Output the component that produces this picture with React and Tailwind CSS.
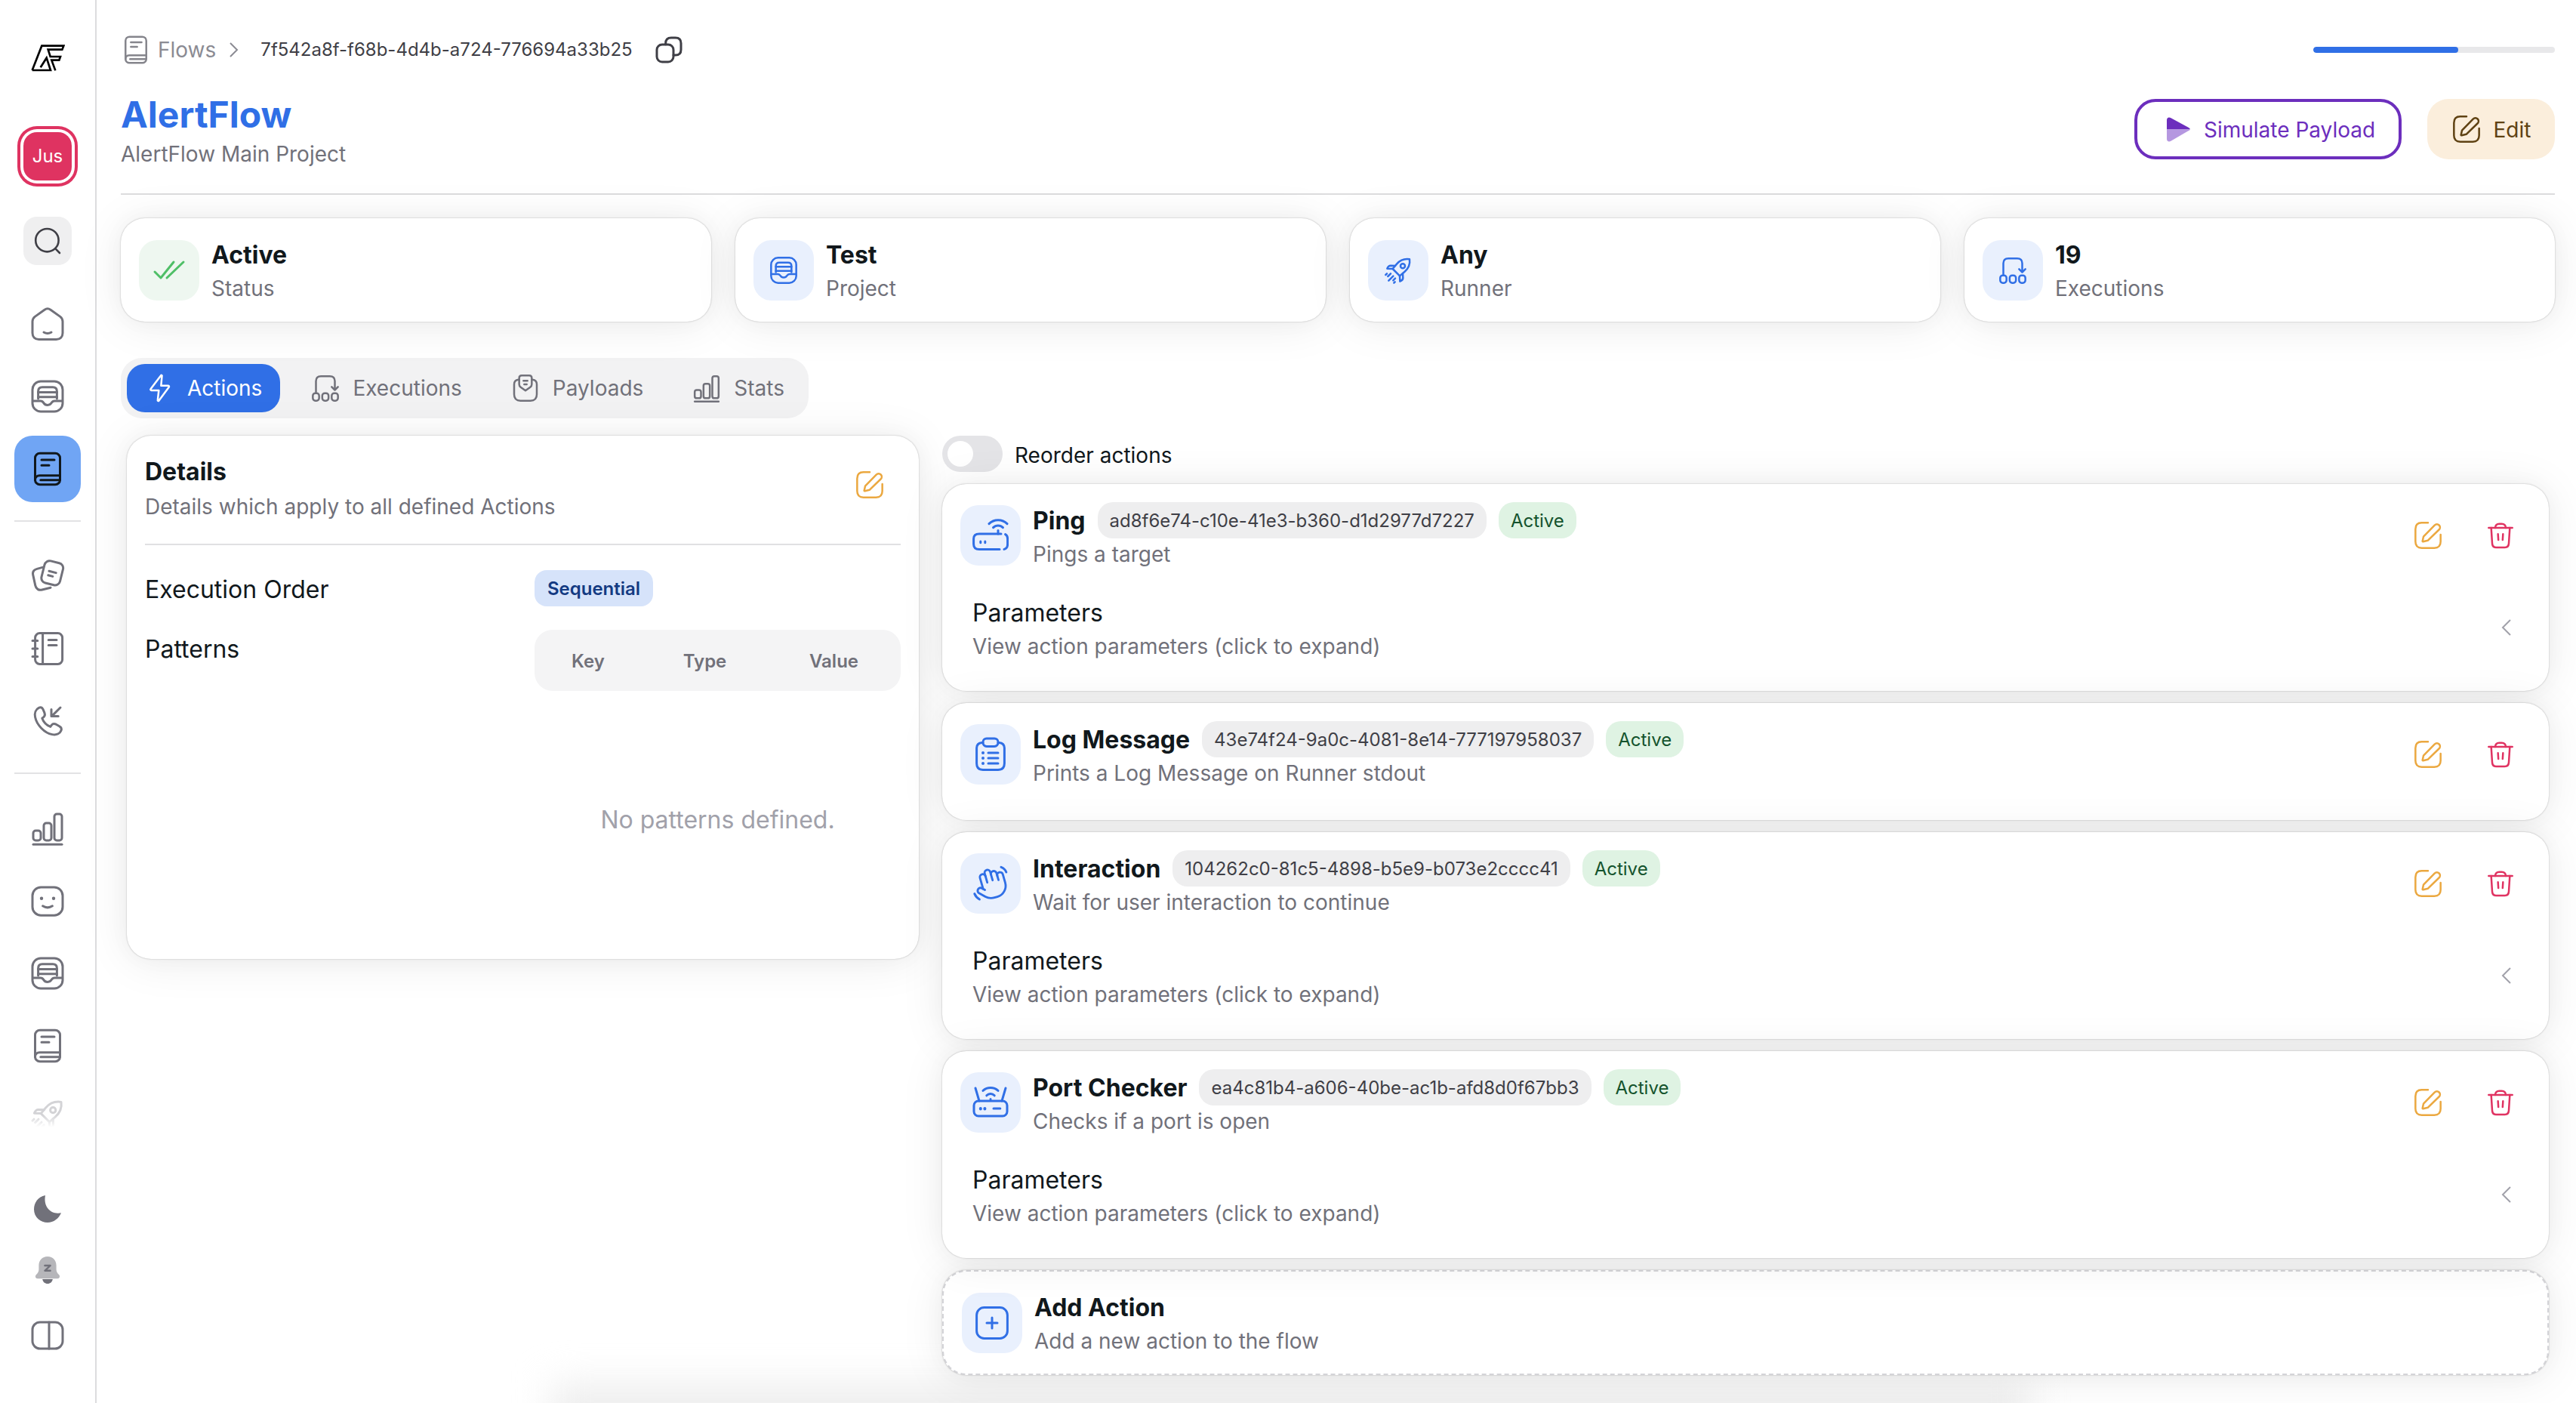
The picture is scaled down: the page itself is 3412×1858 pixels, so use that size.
import React from "react";

const Ic = ({ size = 48, className = "", children, sw = 1.5 }) => (
  <svg width={size} height={size} viewBox="0 0 24 24" fill="none" stroke="currentColor" strokeWidth={sw} strokeLinecap="round" strokeLinejoin="round" className={"shrink-0 " + className}>
    {children}
  </svg>
);

const Home = (p) => (
  <Ic {...p}>
    <path d="M10 2.6 3.6 7.2C2.6 8 2 9 2 10.4V18c0 2.6 1.6 4.2 4.2 4.2h11.6c2.6 0 4.2-1.6 4.2-4.2v-7.6c0-1.4-.6-2.4-1.6-3.2L14 2.6c-1.2-.9-2.8-.9-4 0Z" />
    <path d="M9.500 17.500c1.600 1 3.400 1 5 0" />
  </Ic>
);
const Inbox = (p) => (
  <Ic {...p}>
    <rect x="2" y="2" width="20" height="20" rx="5.500" />
    <path d="M5.800 13.500V8.600c0-1.700 1-2.700 2.700-2.700h7c1.700 0 2.700 1 2.700 2.700v4.900" />
    <path d="M5.800 9.200h12.400M5.800 12.400h12.400" />
    <path d="M2.400 15h5c1 0 1.500.5 2 1.300.6 1 1.300 1.400 2.600 1.400s2-.4 2.600-1.400c.5-.8 1-1.300 2-1.300h5" />
  </Ic>
);
const Book = (p) => (
  <Ic {...p}>
    <rect x="3.750" y="1.600" width="16.500" height="20.800" rx="3.200" />
    <path d="M3.750 19.400c0-1.900 1.200-3 3-3h13.500" />
    <path d="M7.400 19.400h12.800" />
    <path d="M8 6h8.500M8 9.600h5" />
  </Ic>
);
const Notes = (p) => (
  <Ic {...p}>
    <rect x="8.800" y="2.400" width="12.600" height="15" rx="3.400" transform="rotate(14 15 10)" />
    <path d="M8.600 6.200 5 7.200c-2.100.6-3.100 2-2.600 4.100l1.500 6.900c.5 2.300 2.300 3.400 4.500 2.800l5.600-1.400" />
    <path d="M13 8.600l4.600 1.200M12.400 11.400l3 .8" />
  </Ic>
);
const Notebook = (p) => (
  <Ic {...p}>
    <rect x="3.800" y="1.800" width="18" height="20.400" rx="3" />
    <path d="M8.800 1.800v20.400M12.600 6.200h5.400M12.600 9.800h5.400" />
    <path d="M2 6.800h3.400M2 12h3.400M2 17.200h3.400" />
  </Ic>
);
const Phone = (p) => (
  <Ic {...p}>
    <path d="M10 6.600 9 4.200C8.400 3 7.400 2.600 6.200 3.200 4.200 4.200 3.200 6.600 3.800 9.400c1 5 6 10.400 11.200 11.400 3 .6 5.200-.6 6-2.600.4-1.200 0-2.200-1.200-2.800L17.400 14c-1.200-.5-2.100-.2-2.800.7l-.7 1c-2.400-.9-4.600-3.200-5.500-5.600l1-.8c.8-.7 1-1.600.6-2.700Z" />
    <path d="M20.500 3 14.800 8.700M14.500 4.200v4.600h4.600" />
  </Ic>
);
const Bars = (p) => (
  <Ic {...p}>
    <rect x="2.500" y="13.500" width="5" height="6.500" rx="1.600" />
    <rect x="9.500" y="8.500" width="5" height="11.500" rx="1.600" />
    <rect x="16.500" y="2.500" width="5" height="17.500" rx="1.600" />
    <path d="M2.500 22.600h19" />
  </Ic>
);
const Smile = (p) => (
  <Ic {...p}>
    <rect x="2" y="3" width="20" height="18.600" rx="5.600" />
    <path d="M8 10.400h.01M16 10.400h.01" strokeWidth="2.200" />
    <path d="M8.800 15.400c2 1.300 4.400 1.300 6.400 0" />
  </Ic>
);
const Rocket = (p) => (
  <Ic {...p}>
    <path d="M21 3.200c-4-.6-7.600.8-10.200 3.800L7.600 10.800l5.600 5.600 3.800-3.200C20 10.600 21.600 7.200 21 3.200Z" />
    <circle cx="15.600" cy="8.600" r="1.800" />
    <path d="M9.600 8.400 6 8.200c-1.200 0-2.200.8-2.800 2.400l4.400.2M15.600 14.400l.2 3.600c0 1.200-.8 2.200-2.400 2.800l-.2-4.400" />
    <path d="M6 14.600 3.800 16.800M8 16.600l-3.600 3.600M9.600 18.400l-1.600 1.600M3 14.600l-1 1M9.400 21.200l-.8.8" />
  </Ic>
);
const Edit = (p) => (
  <Ic {...p}>
    <path d="M12 2H7C3.600 2 2 3.600 2 7v10c0 3.400 1.600 5 5 5h10c3.400 0 5-1.600 5-5v-5.600" />
    <path d="M7.600 16.600 8.400 13 17.200 4c1.100-1.100 2.600-1.100 3.600-.1s1 2.500-.1 3.600l-8.900 8.600-3.600.9a.5.5 0 0 1-.6-.4Z" />
  </Ic>
);
const Trash = (p) => (
  <Ic {...p}>
    <path d="M2.600 6h18.800" />
    <path d="M7.800 6c.1-2 1.400-3.200 3.200-3.200h2c1.800 0 3.100 1.200 3.200 3.200" />
    <path d="m4.600 6 .8 12.400c.1 2 1.400 3.200 3.200 3.200h6.800c1.800 0 3.100-1.200 3.200-3.200L19.400 6" />
    <path d="m10 11 .3 4.600M14 11l-.3 4.600" />
  </Ic>
);
const Flow = (p) => (
  <Ic {...p}>
    <rect x="2" y="16" width="5" height="6" rx="2" />
    <rect x="9.500" y="16" width="5" height="6" rx="2" />
    <rect x="17" y="16" width="5" height="6" rx="2" />
    <path d="M4.500 16V6.500c0-2.600 1.400-4 4-4h7c2.600 0 4 1.400 4 4V13" />
    <path d="m17 11 2.500 2.500L22 11" />
  </Ic>
);
const Payload = (p) => (
  <Ic {...p}>
    <path d="M7 5.200H6.400C4.200 5.400 3 6.800 3 9v8c0 3.200 1.800 5 5 5h8c3.200 0 5-1.800 5-5V9c0-2.200-1.200-3.600-3.400-3.800H17" />
    <path d="M7 4c0-1.200.8-2 2-2h6c1.200 0 2 .8 2 2v5c0 1-.4 1.600-1.200 2.200L12 14l-3.800-2.800C7.400 10.600 7 10 7 9V4Z" />
    <path d="M10.400 6.200h3.200M11 9h2" />
  </Ic>
);
const Zap = (p) => (
  <Ic {...p}>
    <path d="M13.500 2.400c.2-.5-.4-.9-.8-.5L4.600 12.600c-.4.5-.1 1.200.5 1.200H11l-.9 7.800c-.1.5.6.8.9.4l8-10.800c.4-.5 0-1.200-.6-1.200h-5.600l.7-7.600Z" />
  </Ic>
);

const Logo = () => (
  <svg width="45" height="36" viewBox="0 0 135 106" fill="none" stroke="#000" strokeWidth="8" strokeLinejoin="miter" className="shrink-0">
    <path d="M5 101 43 4h87l-6 15H68l9 28h40l-5 14H82l15 41" />
    <path d="M5 101h73L62 52 38 90" />
  </svg>
);

const NavItem = ({ children, active }) => (
  <div className={"flex h-[88px] w-[88px] items-center justify-center rounded-[24px] " + (active ? "bg-[#70a5f4] text-[#11181c]" : "text-[#71717a]")}>
    {children}
  </div>
);

const Sidebar = () => (
  <aside className="flex h-[1858px] w-[128px] shrink-0 flex-col items-center border-r-2 border-[#dcdcde]">
    <div className="mt-[58px] flex h-[36px] items-center justify-center pt-[2px]"><Logo /></div>
    <div className="mt-[73px] flex h-[80px] w-[80px] items-center justify-center rounded-[26px] bg-[#df3361] p-[4px]">
      <div className="flex h-full w-full items-center justify-center rounded-[22px] bg-white p-[4px]">
        <div className="flex h-full w-full items-center justify-center rounded-[18px] bg-[#df3361] text-[24px] text-white">Jus</div>
      </div>
    </div>
    <div className="mt-[40px] flex h-[64px] w-[64px] items-center justify-center rounded-[18px] bg-[#efeff0] text-[#3f3f46]">
      <svg width="48" height="48" viewBox="0 0 24 24" fill="none" stroke="currentColor" strokeWidth="1.300" strokeLinecap="round"><circle cx="11.700" cy="11.600" r="7.600" /><path d="M17.600 17.600 20 20" /></svg>
    </div>
    <div className="mt-[34px] flex flex-col gap-2">
      <NavItem><Home size={48} /></NavItem>
      <NavItem><Inbox size={48} /></NavItem>
      <NavItem active><Book size={48} /></NavItem>
    </div>
    <div className="mt-[24px] h-[2px] w-[88px] bg-[#e2e2e4]" />
    <div className="mt-[28px] flex flex-col gap-2">
      <NavItem><Notes size={48} /></NavItem>
      <NavItem><Notebook size={48} /></NavItem>
      <NavItem><Phone size={48} /></NavItem>
    </div>
    <div className="mt-[24px] h-[2px] w-[88px] bg-[#e2e2e4]" />
    <div className="mt-[28px] flex flex-col gap-2">
      <NavItem><Bars size={48} /></NavItem>
      <NavItem><Smile size={48} /></NavItem>
      <NavItem><Inbox size={48} /></NavItem>
      <NavItem><Book size={48} /></NavItem>
      <div className="-mt-[4px] opacity-30 [mask-image:linear-gradient(to_bottom,black_50%,transparent_68%)]"><NavItem><Rocket size={48} /></NavItem></div>
    </div>
    <div className="mt-[56px] flex h-[48px] items-center text-[#71717a]">
      <svg width="48" height="48" viewBox="0 0 24 24" fill="currentColor"><path d="M10.500 3C5.500 4 3 8 3 12.200 3 17.500 7.400 21 12 21c4 0 7.600-2.800 9-6.400-6.600 1.400-12-3.800-10.500-11.600Z" /></svg>
    </div>
    <div className="mt-[33px] flex h-[48px] items-center">
      <svg width="48" height="48" viewBox="0 0 24 24">
        <path d="M12 3c-3.600 0-5.800 2.500-5.800 6v2.600c0 1-.6 2.400-1.700 3.400-1 1-.6 2.600 1 2.600h13c1.600 0 2-1.600 1-2.600-1.100-1-1.700-2.400-1.700-3.400V9c0-3.500-2.200-6-5.800-6Z" fill="#b6b6ba" />
        <path d="M8.600 18c.3 1.900 1.600 3 3.400 3s3.100-1.100 3.400-3Z" fill="#71717a" />
        <path d="M10.200 9h3.600l-3.600 3.400h3.600" fill="none" stroke="#71717a" strokeWidth="1.200" strokeLinecap="round" strokeLinejoin="round" />
      </svg>
    </div>
    <div className="mt-[38px] flex h-[48px] items-center text-[#71717a]">
      <Ic size={48}><rect x="2" y="3.500" width="20" height="17.500" rx="5" /><path d="M13 3.500V21" /></Ic>
    </div>
  </aside>
);

const cardShadow = "shadow-[0_0_30px_0_rgba(0,0,0,0.03),0_4px_60px_0_rgba(0,0,0,0.08),0_0_2px_0_rgba(0,0,0,0.3)]";

const StatCard = ({ icon, title, sub, green }) => (
  <div className={"flex h-[137px] flex-1 items-center gap-4 rounded-[32px] bg-white px-[24px] " + cardShadow}>
    <div className={"flex h-[80px] w-[80px] items-center justify-center rounded-[24px] " + (green ? "bg-[#eef7f0] text-[#4fbf67]" : "bg-[#e9f0fd] text-[#306fe6]")}>{icon}</div>
    <div>
      <div className="text-[32px] leading-[48px] font-bold text-[#11181c]">{title}</div>
      <div className="text-[28px] leading-[40px] text-[#71717a]">{sub}</div>
    </div>
  </div>
);

const Tab = ({ icon, label, active }) => (
  <div className={"flex h-[64px] items-center gap-4 rounded-[24px] px-[24px] text-[28px] " + (active ? "bg-[#306fe6] text-white" : "text-[#71717a]")}>
    {icon}
    <span>{label}</span>
  </div>
);

const ActionIcons = {
  ping: (
    <Ic size={48} className="text-[#306fe6]">
      <path d="M19 11H4.500C2 11 .8 12.300 .8 14.300v3.400c0 2.200 1.200 3.500 3.700 3.500H18M21 21.200c1.500-.3 2.300-1.500 2.300-3.400v-3.500c0-1.500-.5-2.500-1.500-3" />
      <path d="M5.400 16v.9M8.400 16v.9" />
      <path d="M17 11V8.800" />
      <path d="M13.800 6.800a4.500 4.500 0 0 1 6.400 0M11 4.300a8.500 8.500 0 0 1 12 0" />
    </Ic>
  ),
  log: (
    <Ic size={48} className="text-[#306fe6]">
      <path d="M7 4.200H6.400C4 4.400 2.800 5.600 2.800 7.800V18c0 2.800 1.400 4.200 4.200 4.200h10c2.800 0 4.200-1.400 4.200-4.200V7.800c0-2.200-1.200-3.400-3.600-3.600H17" />
      <rect x="7" y="1.500" width="10" height="5.200" rx="2.400" />
      <path d="M7 11h.01M7 14.500h.01M7 18h.01" strokeWidth="2" />
      <path d="M10.500 11h6.500M10.500 14.500h6.500M10.500 18h6.500" />
    </Ic>
  ),
  hand: (
    <Ic size={48} className="text-[#306fe6]">
      <g transform="rotate(-16 12 12) translate(.6 .8) scale(.95)">
        <path d="M18 11V6a2 2 0 0 0-2-2 2 2 0 0 0-2 2" />
        <path d="M14 10V4a2 2 0 0 0-2-2 2 2 0 0 0-2 2v2" />
        <path d="M10 10.500V6a2 2 0 0 0-2-2 2 2 0 0 0-2 2v8" />
        <path d="M18 8a2 2 0 1 1 4 0v6a8 8 0 0 1-8 8h-2c-2.800 0-4.500-.86-5.990-2.340l-3.600-3.600a2 2 0 0 1 2.830-2.820L7 15" />
      </g>
      <path d="M19 1.200c1.600.6 2.800 1.700 3.400 3.300M1.400 18.800c.7 1.700 1.700 2.800 3.300 3.700" />
    </Ic>
  ),
  port: (
    <Ic size={48} className="text-[#306fe6]">
      <rect x="1" y="11" width="22" height="10" rx="3" />
      <path d="M5.400 16v.2M8.200 16v.2" strokeWidth="2" />
      <path d="M14 16h4.400" />
      <path d="M2 2.500 4.500 11M22 2.500 19.500 11" />
      <path d="M9.400 7.400a3.600 3.600 0 0 1 5.200 0M7 4.200a7.500 7.500 0 0 1 10 0M12 9.800v.2" />
    </Ic>
  ),
};

const ActionCard = ({ icon, name, id, sub, params }) => (
  <div className={"relative rounded-[32px] bg-white px-[24px] pt-[24px] " + cardShadow + " " + (params ? "pb-[39px]" : "pb-[43px]")}>
    <div className="flex items-center gap-4">
      <div className="flex h-[80px] w-[80px] items-center justify-center rounded-[24px] bg-[#e9f0fd]">{ActionIcons[icon]}</div>
      <div className="flex-1">
        <div className="flex items-center gap-4">
          <span className="pt-[2px] text-[32px] leading-[46px] font-bold text-[#11181c]">{name}</span>
          <span className="flex h-[48px] items-center rounded-[20px] bg-[#eeeeef] px-[16px] pt-[1px] text-[24px] text-[#3f3f46]">{id}</span>
          <span className="flex h-[48px] items-center rounded-[20px] bg-[#dff3e3] px-[16px] pt-[1px] text-[24px] text-[#14532d]">Active</span>
        </div>
        <div className="pt-[2px] text-[28px] leading-[38px] text-[#71717a]">{sub}</div>
      </div>
      <div className="flex items-center gap-4">
        <div className="flex h-[80px] w-[80px] items-center justify-center text-[#eba840]"><Edit size={40} /></div>
        <div className="flex h-[80px] w-[80px] items-center justify-center text-[#e03362]"><Trash size={40} /></div>
      </div>
    </div>
    {params && (
      <div className="mt-[33px] flex items-center justify-between pl-[16px] pr-[27px]">
        <div>
          <div className="pt-[4px] text-[32px] leading-[44px] text-[#11181c]">Parameters</div>
          <div className="mt-[2px] text-[28px] leading-[40px] text-[#71717a]">View action parameters (click to expand)</div>
        </div>
        <svg width="14" height="22" viewBox="0 0 14 22" fill="none" stroke="#a1a1aa" strokeWidth="2" className="-mr-[2px]"><path d="M12 1 2 11l10 10" /></svg>
      </div>
    )}
  </div>
);

export default function App() {
  return (
    <div className="relative flex h-[1858px] w-[3412px] overflow-hidden bg-white font-['Inter',sans-serif] text-[#11181c]">
      <div className="absolute left-[730px] top-[1832px] h-[100px] w-[1960px] bg-[#eeeeee] blur-[24px]" />
      <Sidebar />
      <main className="relative min-w-0 flex-1 pl-[32px] pr-[28px]">
        <div className="mt-[46px] flex h-[40px] items-center justify-between">
          <div className="flex items-center">
            <Book size={40} className="text-[#85858c]" />
            <span className="ml-[9px] text-[28px] text-[#8b8b93]">Flows</span>
            <svg width="14" height="20" viewBox="0 0 14 20" fill="none" stroke="#8b8b93" strokeWidth="2" className="ml-[17px]"><path d="m2 1 9 9-9 9" /></svg>
            <span className="ml-[28px] text-[24px] text-[#3f3f46]">7f542a8f-f68b-4d4b-a724-776694a33b25</span>
            <svg width="40" height="40" viewBox="0 0 24 24" fill="none" stroke="#3f3f46" strokeWidth="1.800" strokeLinecap="round" strokeLinejoin="round" className="ml-[28px]">
              <path d="M9.400 7.600V6.800c0-3 1.400-4.400 4.400-4.400h3.400c3 0 4.400 1.400 4.400 4.400v5c0 3-1.400 4.400-4.400 4.400h-1.600" />
              <rect x="2.400" y="7.800" width="13.200" height="13.800" rx="4.200" />
            </svg>
          </div>
          <div className="h-[8px] w-[320px] overflow-hidden rounded-full bg-[#e8e8ea]"><div className="h-full w-3/5 rounded-full bg-[#306fe6]" /></div>
        </div>

        <div className="mt-[32px] flex items-center justify-between">
          <div>
            <div className="pt-[4px] text-[48px] leading-[60px] font-bold text-[#306fe6]">AlertFlow</div>
            <div className="mt-[2px] text-[28px] leading-[40px] text-[#71717a]">AlertFlow Main Project</div>
          </div>
          <div className="flex items-center gap-[34px]">
            <div className="flex h-[80px] w-[354px] items-center gap-[16px] rounded-[28px] border-[4px] border-[#6c2ebd] pl-[38px] text-[28px] text-[#6c2ebd]">
              <svg width="34" height="34" viewBox="0 0 34 34" className="shrink-0">
                <path d="M1 5c0-3 2.500-4.500 5-3l24 13c.8.500 1.600 1.200 2 2H1Z" fill="#6c2ebd" />
                <path d="M1 17h31c-.4.900-1.200 1.500-2 2L6 33c-2.500 1.200-5 0-5-3Z" fill="#b597e0" />
              </svg>
              <span className="pt-[2px]">Simulate Payload</span>
            </div>
            <div className="flex h-[80px] w-[169px] items-center justify-center gap-[16px] rounded-[28px] bg-[#fbeedc] text-[28px] text-[#5f4213]">
              <Edit size={40} />
              <span className="pt-[2px]">Edit</span>
            </div>
          </div>
        </div>

        <div className="mt-[32px] h-[2px] bg-[#dcdcde]" />

        <div className="mt-[31px] flex gap-[32px]">
          <StatCard green title="Active" sub="Status" icon={<Ic size={48}><path d="M2.500 13 6.500 17 15 6.500M10.500 17 21.500 6.500" /></Ic>} />
          <StatCard title="Test" sub="Project" icon={<Inbox size={40} />} />
          <StatCard title="Any" sub="Runner" icon={<Rocket size={40} />} />
          <StatCard title="19" sub="Executions" icon={<Flow size={40} />} />
        </div>

        <div className="mt-[48px] flex h-[80px] w-[911px] items-center gap-4 rounded-[28px] bg-[#f2f2f3] p-[8px]">
          <Tab active icon={<Zap size={40} />} label="Actions" />
          <Tab icon={<Flow size={40} />} label="Executions" />
          <Tab icon={<Payload size={40} />} label="Payloads" />
          <Tab icon={<Bars size={40} />} label="Stats" />
        </div>

        <div className="mt-[23px] flex gap-[31px] pl-[8px] pr-[8px]">
          <section className={"flex h-[693px] w-[1049px] shrink-0 flex-col rounded-[32px] bg-white px-[24px] pt-[24px] " + cardShadow}>
            <div className="flex items-center justify-between">
              <div>
                <div className="text-[32px] leading-[48px] font-bold text-[#11181c]">Details</div>
                <div className="pt-[4px] text-[28px] leading-[36px] text-[#71717a]">Details which apply to all defined Actions</div>
              </div>
              <div className="-mt-[6px] mr-[21px] text-[#eba840]"><Edit size={40} /></div>
            </div>
            <div className="mt-[31px] h-[2px] bg-[#e0e0e2]" />
            <div className="mt-[33px] flex items-center">
              <div className="w-[516px] pt-[4px] text-[32px] leading-[44px] text-[#11181c]">Execution Order</div>
              <div className="flex h-[48px] w-[157px] items-center justify-center rounded-[16px] bg-[#d6e3fa] pt-[1px] text-[24px] font-semibold text-[#133a82]">Sequential</div>
            </div>
            <div className="mt-[31px] flex items-start">
              <div className="w-[516px] pt-[4px] text-[32px] leading-[44px] text-[#11181c]">Patterns</div>
              <div className="flex-1">
                <div className="grid h-[81px] grid-cols-[142px_167px_175px] items-center rounded-[24px] bg-[#f4f4f5] pt-[2px] text-center text-[24px] font-semibold text-[#71717a]">
                  <span>Key</span><span>Type</span><span>Value</span>
                </div>
                <div className="mt-[145px] pt-[4px] text-center text-[32px] leading-[44px] text-[#a1a1aa]">No patterns defined.</div>
              </div>
            </div>
          </section>

          <section className="min-w-0 flex-1 pr-0">
            <div className="flex items-center gap-4">
              <div className="flex h-[48px] w-[80px] items-center rounded-full bg-[#e4e4e7] pl-[7px]"><div className="h-[34px] w-[34px] rounded-full bg-white" /></div>
              <span className="pt-[4px] text-[28px] text-[#11181c]">Reorder actions</span>
            </div>
            <div className="mt-[16px] flex flex-col gap-4">
              <ActionCard params icon="ping" name="Ping" id="ad8f6e74-c10e-41e3-b360-d1d2977d7227" sub="Pings a target" />
              <ActionCard icon="log" name="Log Message" id="43e74f24-9a0c-4081-8e14-777197958037" sub="Prints a Log Message on Runner stdout" />
              <ActionCard params icon="hand" name="Interaction" id="104262c0-81c5-4898-b5e9-b073e2cccc41" sub="Wait for user interaction to continue" />
              <ActionCard params icon="port" name="Port Checker" id="ea4c81b4-a606-40be-ac1b-afd8d0f67bb3" sub="Checks if a port is open" />
              <div className={"flex h-[139px] items-center gap-4 rounded-[32px] border-2 border-dashed border-[#d4d4d8] bg-white pl-[24px] " + cardShadow}>
                <div className="flex h-[80px] w-[80px] items-center justify-center rounded-[24px] bg-[#e9f0fd] text-[#306fe6]">
                  <Ic size={48}><rect x="1.800" y="1.800" width="20.400" height="20.400" rx="5" /><path d="M12 8.500v7M8.500 12h7" /></Ic>
                </div>
                <div>
                  <div className="text-[32px] leading-[48px] font-bold text-[#11181c]">Add Action</div>
                  <div className="text-[28px] leading-[40px] text-[#71717a]">Add a new action to the flow</div>
                </div>
              </div>
            </div>
          </section>
        </div>
      </main>
    </div>
  );
}
